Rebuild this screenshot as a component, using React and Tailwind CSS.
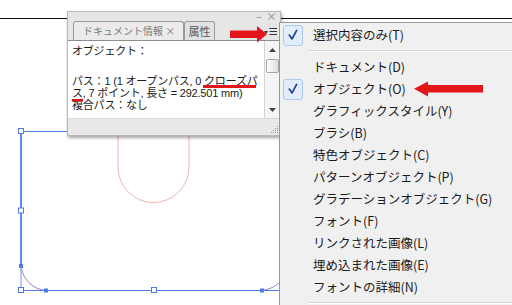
import React from "react";

function CheckBox() {
  return (
    <div className="w-[20px] h-[21px] rounded-[3px] border border-[#a9c9ef] bg-[#e3edfa] flex items-center justify-center">
      <svg width="20" height="21" viewBox="0 0 20 21">
        <path d="M5.8 10 L9 14.3 L14 4.8" fill="none" stroke="#1d3a92" strokeWidth="1.8" strokeLinecap="round" strokeLinejoin="round" />
      </svg>
    </div>
  );
}

function MenuItem({ label, checked }) {
  return (
    <div className="h-[22px] flex items-center">
      <div className="w-[33px] shrink-0 pl-[3px] flex items-center">{checked && <CheckBox />}</div>
      <span className="text-[12.5px] text-[#1b1b1b] leading-none whitespace-nowrap">{label}</span>
    </div>
  );
}

function Separator() {
  return (
    <div className="h-[10px] flex flex-col justify-center pl-[29px]">
      <div className="border-t border-[#d5d5d5]" />
      <div className="border-t border-white" />
    </div>
  );
}

export default function App() {
  const items = [
    "ドキュメント(D)",
    "オブジェクト(O)",
    "グラフィックスタイル(Y)",
    "ブラシ(B)",
    "特色オブジェクト(C)",
    "パターンオブジェクト(P)",
    "グラデーションオブジェクト(G)",
    "フォント(F)",
    "リンクされた画像(L)",
    "埋め込まれた画像(E)",
    "フォントの詳細(N)",
  ];
  return (
    <div className="relative w-[512px] h-[305px] overflow-hidden bg-white font-['Noto_Sans_CJK_JP','Noto_Sans',sans-serif]">
      {/* artboard drawing */}
      <svg className="absolute inset-0" width="512" height="305" viewBox="0 0 512 305">
        <line x1="0" y1="18.5" x2="512" y2="18.5" stroke="#111" strokeWidth="1" />
        <path d="M118 120 V167 A35.5 35.5 0 0 0 189 167 V120" fill="none" stroke="#f0b4b4" strokeWidth="1" />
        <line x1="21" y1="131.5" x2="200" y2="131.5" stroke="#4f7be6" strokeWidth="1" />
        <line x1="21" y1="131" x2="21" y2="266" stroke="#4f7be6" strokeWidth="1.8" />
        <line x1="21" y1="266" x2="21" y2="290" stroke="#4f7be6" strokeWidth="0.8" />
        <line x1="21" y1="290.5" x2="290" y2="290.5" stroke="#4f7be6" strokeWidth="1" />
        <path d="M21.5 269 C 24 280, 33 289.5, 46 290.5" fill="none" stroke="#6d62c6" strokeWidth="0.8" />
        <path d="M262 290.5 C 270 289.5, 276 286, 281 281" fill="none" stroke="#6d62c6" strokeWidth="0.8" />
        {[
          [21, 131],
          [21, 210.5],
          [21, 290],
          [154, 290],
        ].map(([x, y], i) => (
          <rect key={i} x={x - 2.5} y={y - 2.5} width="5" height="5" fill="white" stroke="#4f7be6" strokeWidth="1" />
        ))}
        {[
          [21, 266],
          [46, 290.5],
          [262, 290.5],
        ].map(([x, y], i) => (
          <rect key={i} x={x - 2} y={y - 2} width="4" height="4" fill="#4f7be6" />
        ))}
      </svg>

      {/* floating panel */}
      <div className="absolute left-[67px] top-[11px] w-[214px] h-[125px] flex flex-col border border-[#b8b8b8] bg-[#e6e6e6] shadow-[1px_2px_3px_rgba(0,0,0,0.35)]">
        <div className="h-[9px] flex justify-end items-center gap-[4px] pr-[3px] text-[#8a8a8a] text-[11px] leading-none">
          <span>–</span>
          <span>×</span>
        </div>
        <div className="h-[20px] flex items-end pl-[5px] border-b border-[#8e8e8e]">
          <div className="w-[111px] h-[19px] rounded-t-[3px] border border-b-0 border-[#9a9a9a] bg-[#ebebeb] flex items-center pl-[9px] text-[10px] text-[#7a7a7a] leading-none whitespace-nowrap">
            ドキュメント情報 ×
          </div>
          <div className="w-[31px] h-[19px] rounded-t-[3px] border border-b-0 border-[#9a9a9a] bg-[#e2e2e2] flex items-center justify-center text-[11px] text-[#555] leading-none">
            属性
          </div>
          <svg className="ml-auto mr-[2px] mb-[3px]" width="14" height="10" viewBox="0 0 14 10">
            <polygon points="0,4 4,4 2,7" fill="#333" />
            <line x1="5.5" y1="1.5" x2="13" y2="1.5" stroke="#333" strokeWidth="1" />
            <line x1="5.5" y1="4.5" x2="13" y2="4.5" stroke="#333" strokeWidth="1" />
            <line x1="5.5" y1="7.5" x2="13" y2="7.5" stroke="#333" strokeWidth="1" />
          </svg>
        </div>
        <div className="h-[77px] flex">
          <div className="flex-1 bg-white pl-[4px] pt-[4px] text-[11px] leading-[12px] tracking-[-0.2px] text-[#1a1a1a] whitespace-nowrap font-['Liberation_Sans','Noto_Sans_CJK_JP',sans-serif]">
            <div>オブジェクト：</div>
            <div className="mt-[18px]">パス：1 (1 オープンパス, 0 クローズパ</div>
            <div>ス, 7 ポイント, 長さ = 292.501 mm)</div>
            <div>複合パス：なし</div>
          </div>
          <div className="w-[16px] flex flex-col bg-[#f4f4f4] border-l border-[#d4d4d4]">
            <div className="h-[17px] flex items-center justify-center">
              <svg width="7" height="4" viewBox="0 0 7 4"><polygon points="0,4 7,4 3.5,0" fill="#444" /></svg>
            </div>
            <div className="h-[14px] mx-[1px] mt-[1px] rounded-[2px] border border-[#a6a6a6] bg-gradient-to-r from-[#fdfdfd] to-[#dedede]" />
            <div className="flex-1" />
            <div className="h-[17px] flex items-center justify-center">
              <svg width="7" height="4" viewBox="0 0 7 4"><polygon points="0,0 7,0 3.5,4" fill="#444" /></svg>
            </div>
          </div>
        </div>
        <div className="flex-1 flex items-end justify-end border-t border-[#d8d8d8] bg-[#e8e8e8] pr-[1px] pb-[1px]">
          <svg width="9" height="9" viewBox="0 0 9 9">
            {[
              [7, 1], [5, 3], [7, 3], [3, 5], [5, 5], [7, 5], [1, 7], [3, 7], [5, 7], [7, 7],
            ].map(([x, y], i) => (
              <rect key={i} x={x} y={y} width="1" height="1" fill="#9a9a9a" />
            ))}
          </svg>
        </div>
      </div>

      {/* dropdown menu */}
      <div className="absolute left-[279px] top-[22px] right-0 bottom-0 bg-[#f0f0f0] border-l border-t border-[#979797] pt-[1px]">
        <MenuItem label="選択内容のみ(T)" checked />
        <Separator />
        {items.map((t) => (
          <MenuItem key={t} label={t} checked={t === "オブジェクト(O)"} />
        ))}
        <Separator />
      </div>

      {/* red annotations */}
      <svg className="absolute inset-0 pointer-events-none" width="512" height="305" viewBox="0 0 512 305">
        <rect x="230" y="30.5" width="29" height="7.5" fill="#e3161b" />
        <polygon points="257,26 267,34.3 257,42.5" fill="#e3161b" />
        <rect x="427" y="85" width="56" height="7.5" fill="#e3161b" />
        <polygon points="428,81.5 414,88.7 428,96.5" fill="#e3161b" />
        <rect x="203" y="85" width="53" height="3" fill="#e3161b" />
        <rect x="72" y="99" width="11" height="2.5" fill="#e3161b" />
      </svg>
    </div>
  );
}
